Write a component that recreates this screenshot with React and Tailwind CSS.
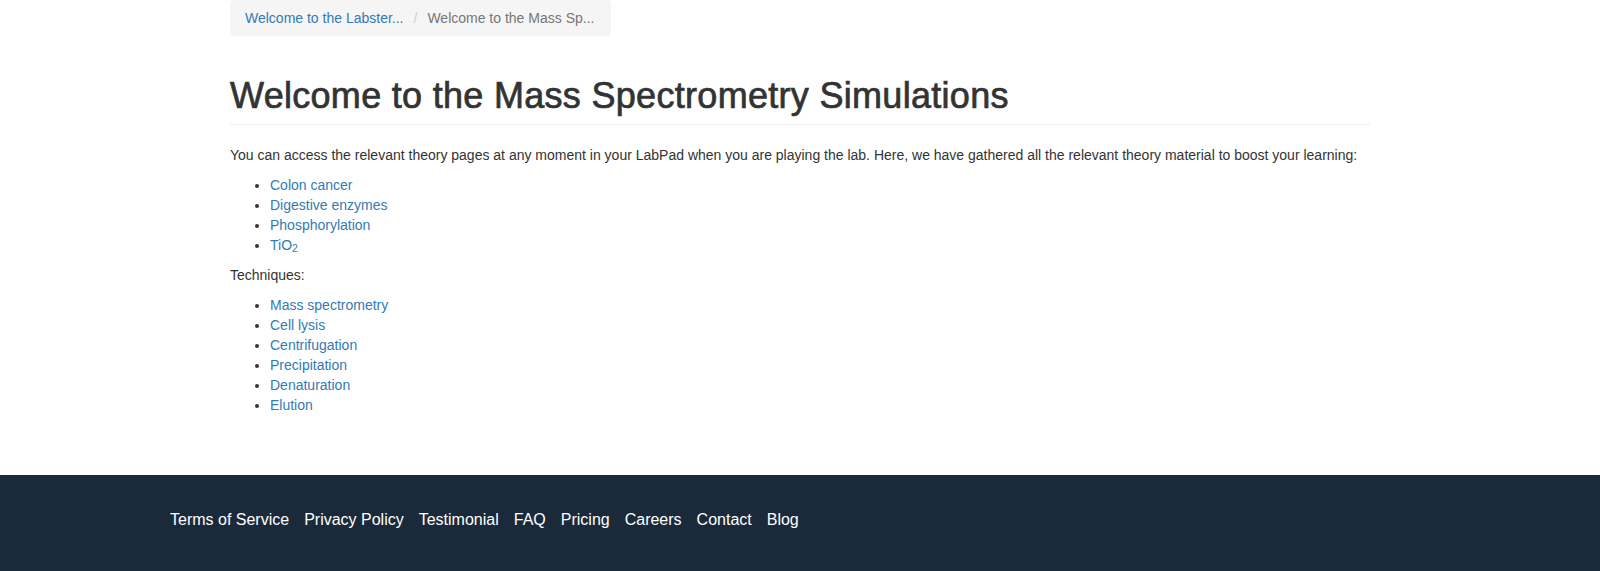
// App.jsx — theory index page
const theory = ['Colon cancer', 'Digestive enzymes', 'Phosphorylation'];
const techniques = ['Mass spectrometry', 'Cell lysis', 'Centrifugation', 'Precipitation', 'Denaturation', 'Elution'];
const footerLinks = ['Terms of Service', 'Privacy Policy', 'Testimonial', 'FAQ', 'Pricing', 'Careers', 'Contact', 'Blog'];

const Item = ({ children }) => (
  <li>
    <a href="#" className="text-[#337ab7] hover:underline">{children}</a>
  </li>
);

export default function App() {
  return (
    <div className="min-h-screen bg-white font-['Liberation_Sans',Arial,sans-serif] text-[14px] leading-[20px] text-[#333]">
      <main className="mx-auto w-[1140px] pb-[50px]">
        <ol className="flex w-fit items-center rounded-[4px] bg-[#f5f5f5] px-[15px] py-[8px]">
          <li>
            <a href="#" className="text-[#337ab7]">Welcome to the Labster...</a>
          </li>
          <li className="px-[10px] text-[#ccc]">/</li>
          <li className="pr-[2px] text-[#777]">Welcome to the Mass Sp...</li>
        </ol>

        <div className="mt-[40px] mb-[20px] border-b border-[#eee] pb-[8px]">
          <h1 className="text-[36px] leading-[39.6px] font-normal tracking-[0.3px] text-[#333] [-webkit-text-stroke:0.7px_#333]">
            Welcome to the Mass Spectrometry Simulations
          </h1>
        </div>

        <p className="mb-[10px]">
          You can access the relevant theory pages at any moment in your LabPad when you are playing the lab. Here, we have gathered all the relevant theory material to boost your learning:
        </p>
        <ul className="mb-[10px] list-disc pl-[40px]">
          {theory.map((t) => (
            <Item key={t}>{t}</Item>
          ))}
          <Item>
            TiO<sub>2</sub>
          </Item>
        </ul>

        <p className="mb-[10px]">Techniques:</p>
        <ul className="mb-[10px] list-disc pl-[40px]">
          {techniques.map((t) => (
            <Item key={t}>{t}</Item>
          ))}
        </ul>
      </main>

      <footer className="bg-[#1b2a3b] pt-[33px] pb-[50px]">
        <nav className="ml-[170px] flex gap-[15px] text-[16px] leading-[23px] text-white">
          {footerLinks.map((l) => (
            <a key={l} href="#">{l}</a>
          ))}
        </nav>
      </footer>
    </div>
  );
}
